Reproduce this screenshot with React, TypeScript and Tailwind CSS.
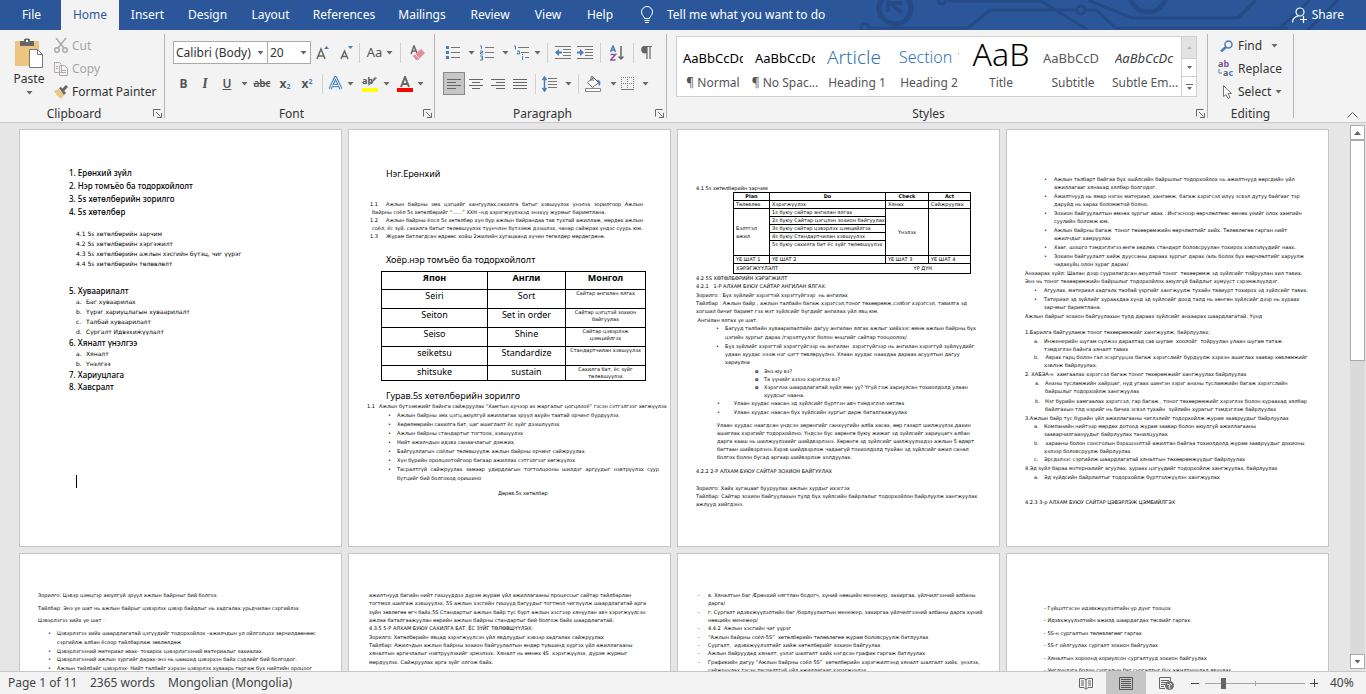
import React, { useState } from "react";

type Item = { m?: string; lines: string[]; c?: string };

const tabs = [
  { name: "File", w: "w-[59px]" },
  { name: "Home", w: "w-[58px]" },
  { name: "Insert", w: "w-[57px]" },
  { name: "Design", w: "w-[63px]" },
  { name: "Layout", w: "w-[63px]" },
  { name: "References", w: "w-[84px]" },
  { name: "Mailings", w: "w-[72px]" },
  { name: "Review", w: "w-[64px]" },
  { name: "View", w: "w-[52px]" },
  { name: "Help", w: "w-[52px]" },
];

const styles = [
  { name: "¶ Normal", sample: "AaBbCcDc", look: "pt-[2px] text-[13px] text-black" },
  { name: "¶ No Spac...", sample: "AaBbCcDc", look: "pt-[2px] text-[13px] text-black" },
  { name: "Heading 1", sample: "Article", look: "text-[19px] font-light text-[#2e74b5]" },
  { name: "Heading 2", sample: "Section 1", look: "text-[16px] font-light text-[#2e74b5]" },
  { name: "Title", sample: "AaB", look: "pb-2 text-[32px] font-light text-black justify-center" },
  { name: "Subtitle", sample: "AaBbCcD", look: "pt-[2px] text-[13px] text-[#5a5a5a]" },
  { name: "Subtle Em...", sample: "AaBbCcDc", look: "pt-[2px] text-[13px] italic text-[#404040]" },
];

const Arrow = () => (
  <svg width="7" height="4" viewBox="0 0 7 4" className="shrink-0">
    <path d="M.5 0h6L3.500 3.500z" fill="#666" />
  </svg>
);

const Sep = ({ className = "" }: { className?: string }) => (
  <span className={`h-5 w-px shrink-0 bg-[#d0d0d0] ${className}`} />
);

const Tool = ({ label, className = "", children }: { label: string; className?: string; children: React.ReactNode }) => (
  <button type="button" aria-label={label} className={`flex h-[23px] shrink-0 items-center justify-center ${className}`}>
    {children}
  </button>
);

const Launcher = () => (
  <button type="button" aria-label="More options" className="absolute right-[2px] bottom-0">
    <svg width="9" height="9" viewBox="0 0 9 9" fill="none" stroke="#666">
      <path d="M.5 7.500V.5h7M3 3l4.500 4.500M8.500 4v4.500H4" />
    </svg>
  </button>
);

const Group = ({ name, className, launcher = true, children }: { name: string; className: string; launcher?: boolean; children: React.ReactNode }) => (
  <section aria-label={name} className={`relative flex h-[84px] flex-col border-r border-[#b5b5b5] ${className}`}>
    <div className="flex-1">{children}</div>
    <div className="-mb-[2px] h-3 text-center leading-[12px]">{name}</div>
    {launcher && <Launcher />}
  </section>
);

const alignments = [
  { label: "Center", d: "M0 1.500h14M3 4.500h8M0 7.500h14M3 10.500h8" },
  { label: "Align right", d: "M0 1.500h14M5 4.500h9M0 7.500h14M5 10.500h9" },
  { label: "Justify", d: "M0 1.500h14M0 4.500h14M0 7.500h14M0 10.500h14" },
];

const Circuit = () => (
  <svg width="506" height="30" viewBox="860 0 506 30" fill="none" stroke="#254a86" strokeWidth="3" className="absolute top-0 right-0">
    <circle cx="895" cy="8" r="16" strokeWidth="5" />
    <path d="M888 0v12M889 2l13 11M890 3h12" strokeWidth="4" />
    <path d="M870 28h98l22-18h87M1085 10h11l20 18h172M948 1h93l47 29M1088 0l44 18h106l18-18M1278 30l32-30M1308 30l30-30" />
    <circle cx="1081" cy="10" r="4" />
    <circle cx="865" cy="28" r="4" />
    <circle cx="942" cy="0" r="4" />
    <circle cx="1148" cy="-6" r="18" strokeWidth="5" />
  </svg>
);

const Ribbon = () => (
  <div className="relative flex h-[93px] shrink-0 border-b border-[#c9c9c9] bg-[#f3f3f3] pt-1 text-xs text-[#333]">
    <Group name="Clipboard" className="w-[165px] pr-4">
      <div className="flex">
        <button type="button" className="flex w-[54px] shrink-0 flex-col items-center pt-1 pl-1">
          <svg width="28" height="30" viewBox="0 0 28 30">
            <path d="M0 3h24v25H0z" fill="#ecc681" />
            <path d="M5 3h4V1.500C9 0 15 0 15 1.500V3h4v5H5z" fill="#666" />
            <path d="M11 2h2v2h-2z" fill="#fff" />
            <path d="M14.500 11.500h8l5 5v13h-13z" fill="#fff" stroke="#777" />
            <path d="M22.500 11.500v5h5" fill="none" stroke="#777" />
          </svg>
          <span className="mt-[3px] mb-1 leading-[16px]">Paste</span>
          <Arrow />
        </button>
        <div className="flex flex-col">
          <button type="button" className="flex h-[23px] items-center gap-1 text-[#a6a6a6]">
            <svg width="14" height="15" viewBox="0 0 14 15" fill="none" stroke="#a9a9a9" strokeWidth="1.500">
              <path d="M2 0l8 10M12 0L4 10" />
              <circle cx="3" cy="12" r="2.300" />
              <circle cx="11" cy="12" r="2.300" />
            </svg>
            Cut
          </button>
          <button type="button" className="flex h-[23px] items-center gap-1 text-[#a6a6a6]">
            <svg width="14" height="14" viewBox="0 0 14 14" fill="#f3f3f3" stroke="#b0aab0">
              <path d="M.5.5h5l2 2v8h-7zM5.500 3.500h5l3 3v7h-8zM7 8.500h5M7 10.500h5M2 4.500h2M2 6.500h2" />
            </svg>
            Copy
          </button>
          <button type="button" className="flex h-[23px] items-center gap-1 whitespace-nowrap">
            <svg width="14" height="14" viewBox="0 0 14 14">
              <path d="M0 6l5-2 5 6-3 4C4 12 2 9 0 6z" fill="#ecc681" />
              <path d="M5 3l2-1 5 6-2 2z" fill="#666" />
              <path d="M9 5l4-4" stroke="#666" strokeWidth="3" />
            </svg>
            Format Painter
          </button>
        </div>
      </div>
    </Group>

    <Group name="Font" className="w-[270px] pr-6 pl-2">
      <div className="flex items-center pt-[7px]">
        <div className="relative flex items-center">
          <select aria-label="Font" className="h-[23px] w-[95px] appearance-none border border-[#ababab] bg-white pl-[2px] text-[#333]">
            <option>Calibri (Body)</option>
          </select>
          <span className="pointer-events-none absolute right-1"><Arrow /></span>
        </div>
        <div className="relative -ml-px flex items-center">
          <select aria-label="Font size" className="h-[23px] w-11 appearance-none border border-[#ababab] bg-white pl-[2px] text-[#333]">
            <option>20</option>
          </select>
          <span className="pointer-events-none absolute right-1"><Arrow /></span>
        </div>
        <Tool label="Increase font size" className="w-6">
          <svg width="14" height="16" viewBox="0 0 14 16" fill="none" stroke="#666" strokeWidth="1.500">
            <path d="M1 14L5 4l4 10M2.500 11h5" />
            <path d="M8 4l2.500-3L13 4z" fill="#4a7ebb" stroke="none" />
          </svg>
        </Tool>
        <Tool label="Decrease font size" className="w-6">
          <svg width="14" height="16" viewBox="0 0 14 16" fill="none" stroke="#666" strokeWidth="1.500">
            <path d="M1 14l3.500-8L8 14M2.500 11.500h4" />
            <path d="M8 1l2.500 3L13 1z" fill="#4a7ebb" stroke="none" />
          </svg>
        </Tool>
        <Sep />
        <Tool label="Change case" className="w-10 gap-1 text-[13px] text-[#555]">Aa<Arrow /></Tool>
        <Sep />
        <Tool label="Clear formatting" className="w-8">
          <svg width="15" height="16" viewBox="0 0 15 16">
            <path d="M1 9l3-8 3 7M2 6h4" fill="none" stroke="#666" strokeWidth="1.500" />
            <path d="M3 11l8-7 4 4-7 7H6z" fill="#e88a9d" />
            <path d="M5 9l4 4" stroke="#fff" />
          </svg>
        </Tool>
      </div>
      <div className="flex items-center pt-2 text-[#555]">
        <Tool label="Bold" className="w-[21px] font-bold">B</Tool>
        <Tool label="Italic" className="w-[22px] font-serif text-sm font-bold italic">I</Tool>
        <Tool label="Underline" className="w-[22px] font-semibold underline">U</Tool>
        <Tool label="Underline style" className="w-3"><Arrow /></Tool>
        <Tool label="Strikethrough" className="w-6 text-[10px] font-semibold line-through">abc</Tool>
        <Tool label="Subscript" className="w-[22px] font-bold"><span>x<sub className="text-[7px] text-[#4a7ebb]">2</sub></span></Tool>
        <Tool label="Superscript" className="w-[22px] font-bold"><span>x<sup className="text-[7px] text-[#4a7ebb]">2</sup></span></Tool>
        <Sep className="ml-1" />
        <Tool label="Text effects" className="w-9 gap-1">
          <svg width="15" height="15" viewBox="0 0 15 15" fill="none">
            <path d="M2 13L7.500 1.500 13 13M4.500 9.500h6" stroke="#a9cdf0" strokeWidth="4" />
            <path d="M2 13L7.500 1.500 13 13M4.500 9.500h6" stroke="#3c74b4" strokeWidth="2.500" />
            <path d="M2 13L7.500 1.500 13 13M4.500 9.500h6" stroke="#fff" />
          </svg>
          <Arrow />
        </Tool>
        <Tool label="Highlight" className="w-[34px] gap-1">
          <svg width="17" height="16" viewBox="0 0 17 16" className="overflow-visible">
            <text x="0" y="8" fontSize="9" fontWeight="bold" fill="#555">ab</text>
            <path d="M15 2L9 8l-3 2 1-3 6-6z" fill="#777" />
            <path d="M0 12h16v4H0z" fill="#ff0" />
          </svg>
          <Arrow />
        </Tool>
        <Tool label="Font color" className="w-[34px] gap-1">
          <svg width="16" height="16" viewBox="0 0 16 16">
            <path d="M4 11L8 1l4 10M5 8h6" fill="none" stroke="#666" strokeWidth="2" />
            <path d="M0 12h16v4H0z" fill="red" />
          </svg>
          <Arrow />
        </Tool>
      </div>
    </Group>

    <Group name="Paragraph" className="w-[232px] pr-6 pl-2">
      <div className="flex items-center pt-[7px]">
        <Tool label="Bullets" className="w-[34px] gap-2">
          <svg width="14" height="15" viewBox="0 0 14 15">
            <path d="M5 2.500h9M5 7.500h9M5 12.500h9" stroke="#777" />
            <path d="M0 1h3v3H0zM0 6h3v3H0zM0 11h3v3H0z" fill="#4a7ebb" />
          </svg>
          <Arrow />
        </Tool>
        <Tool label="Numbering" className="w-[34px] gap-2">
          <svg width="14" height="16" viewBox="0 0 14 16">
            <path d="M5 2.500h9M5 7.500h9M5 12.500h9" stroke="#777" />
            <path d="M0 1h1.500v3M0 6h2.500v1.500H.5V9H3M0 11h2.500v2H1M2.500 13v2H0" fill="none" stroke="#4a7ebb" />
          </svg>
          <Arrow />
        </Tool>
        <Tool label="Multilevel list" className="w-8 gap-1">
          <svg width="17" height="16" viewBox="0 0 17 16">
            <path d="M5 2.500h11M8 7.500h8M12 12.500h4" stroke="#777" />
            <path d="M1 1h1.500v3.500M4 6h2.500v3H4.500V7.500M9.500 11v4M9.500 9v1" fill="none" stroke="#4a7ebb" />
          </svg>
          <Arrow />
        </Tool>
        <Sep className="ml-1" />
        <Tool label="Decrease indent" className="ml-1 w-[22px]">
          <svg width="16" height="14" viewBox="0 0 16 14">
            <path d="M0 .5h16M8 3.500h8M8 6.500h8M8 9.500h8M0 12.500h16" stroke="#777" />
            <path d="M0 6.500L4 3v2.500h3v2H4V10z" fill="#4a7ebb" />
          </svg>
        </Tool>
        <Tool label="Increase indent" className="w-[22px]">
          <svg width="16" height="14" viewBox="0 0 16 14">
            <path d="M0 .5h16M8 3.500h8M8 6.500h8M8 9.500h8M0 12.500h16" stroke="#777" />
            <path d="M7 6.500L3 3v2.500H0v2h3V10z" fill="#4a7ebb" />
          </svg>
        </Tool>
        <Sep className="ml-1" />
        <Tool label="Sort" className="w-8">
          <svg width="14" height="16" viewBox="0 0 14 16" fill="none" strokeWidth="1.500">
            <path d="M.5 7L3 1l2.500 6M1.500 5h3" stroke="#4a7ebb" />
            <path d="M.5 9.500h5l-5 5.500h5" stroke="#8a4fae" />
            <path d="M11 1v13M8.500 11.500L11 14l2.500-2.500" stroke="#666" />
          </svg>
        </Tool>
        <Sep />
        <Tool label="Show formatting marks" className="w-6">
          <svg width="11" height="13" viewBox="0 0 11 13">
            <path d="M11 .5H4a3 3 0 000 6.500h1M6 .5V13M9 .5V13" fill="none" stroke="#666" strokeWidth="1.200" />
            <path d="M6 .5H4a3 3 0 000 6.500h2z" fill="#666" />
          </svg>
        </Tool>
      </div>
      <div className="flex items-center pt-2">
        <button type="button" aria-label="Align left" className="flex h-[23px] w-[22px] shrink-0 items-center justify-center border border-[#888] bg-[#c6c6c6]">
          <svg width="14" height="12" viewBox="0 0 14 12" stroke="#666"><path d="M0 1.500h14M0 4.500h9M0 7.500h14M0 10.500h9" /></svg>
        </button>
        {alignments.map((a) => (
          <Tool key={a.label} label={a.label} className="w-[22px]">
            <svg width="14" height="12" viewBox="0 0 14 12" stroke="#666"><path d={a.d} /></svg>
          </Tool>
        ))}
        <Sep className="ml-1" />
        <Tool label="Line spacing" className="ml-1 w-[34px] gap-2">
          <svg width="15" height="16" viewBox="0 0 15 16">
            <path d="M6 2.500h9M6 5.500h9M6 8.500h9M6 11.500h9" stroke="#777" />
            <path d="M2.500 1v14M.5 4l2-3 2 3M.5 12l2 3 2-3" fill="none" stroke="#4a7ebb" strokeWidth="1.500" />
          </svg>
          <Arrow />
        </Tool>
        <Sep className="ml-1" />
        <Tool label="Shading" className="ml-1 w-9 gap-2">
          <svg width="17" height="16" viewBox="0 0 17 16">
            <path d="M2.500 6.500l6-5 5 5-6 5z" fill="#fff" stroke="#666" />
            <path d="M6 5V1c0-1 2-1 2 0v4" fill="none" stroke="#666" />
            <path d="M12 4c3 0 4 2 3 5l-1 1c-1-3-1-4-2-6z" fill="#4a7ebb" />
            <path d="M.5 12.500h15v3H.5z" fill="#fff" stroke="#888" />
          </svg>
          <Arrow />
        </Tool>
        <Tool label="Borders" className="w-8 gap-2">
          <svg width="13" height="13" viewBox="0 0 13 13" fill="none" stroke="#777">
            <path d="M.5 0v12M6.500 0v12M12.500 0v12M0 .5h13M0 6.500h13" strokeDasharray="1 1" />
            <path d="M0 12.500h13" />
          </svg>
          <Arrow />
        </Tool>
      </div>
    </Group>

    <Group name="Styles" className="w-[541px] pr-[26px] pl-[9px]">
      <div className="-mr-4 mt-[2px] flex h-[61px] border border-[#cfcfcf] bg-white">
        {styles.map((s) => (
          <button type="button" key={s.name} className="flex w-[72px] flex-col items-center pt-[6px] whitespace-nowrap">
            <span className={`flex h-[30px] w-[60px] items-center overflow-hidden ${s.look}`}>{s.sample}</span>
            <span className="mt-[2px] leading-[16px] text-[#555]">{s.name}</span>
          </button>
        ))}
        <div className="ml-auto flex w-[15px] flex-col border-l border-[#cfcfcf]">
          <button type="button" aria-label="Previous row" className="flex h-[21px] items-center justify-center bg-[#e3e3e3]">
            <svg width="5" height="3" viewBox="0 0 5 3"><path d="M0 3h5L2.500 0z" fill="#bbb" /></svg>
          </button>
          <button type="button" aria-label="Next row" className="flex h-[19px] items-center justify-center border-y border-[#cfcfcf]">
            <svg width="5" height="3" viewBox="0 0 5 3"><path d="M0 0h5L2.500 3z" fill="#666" /></svg>
          </button>
          <button type="button" aria-label="More styles" className="flex flex-1 items-center justify-center">
            <svg width="7" height="6" viewBox="0 0 7 6"><path d="M0 0h7v1H0zM1 3h5L3.500 6z" fill="#666" /></svg>
          </button>
        </div>
      </div>
    </Group>

    <Group name="Editing" launcher={false} className="w-[86px] px-3">
      <button type="button" className="flex h-[23px] items-center gap-[5px]">
        <svg width="13" height="12" viewBox="0 0 13 12" fill="none" stroke="#4a7ebb">
          <circle cx="8.500" cy="4.500" r="3.500" strokeWidth="1.500" />
          <path d="M6 7l-5 4.500" strokeWidth="2.500" />
        </svg>
        Find
        <span className="ml-1"><Arrow /></span>
      </button>
      <button type="button" className="flex h-[23px] items-center gap-1">
        <svg width="16" height="17" viewBox="0 0 16 17" fontSize="9" fontWeight="bold" className="-ml-[2px] shrink-0 overflow-visible">
          <text x="0" y="7" fill="#666">a<tspan fill="#8a4fae">b</tspan></text>
          <text x="5" y="16" fill="#666">a<tspan fill="#4a7ebb">c</tspan></text>
          <path d="M1 9v4h3" fill="none" stroke="#4a7ebb" />
        </svg>
        Replace
      </button>
      <button type="button" className="flex h-[23px] items-center gap-[5px]">
        <svg width="13" height="14" viewBox="0 0 13 14" fill="#fff" stroke="#777">
          <path d="M3.500.5v11l2.500-2 2 4 2-1-2-4h3.500z" />
        </svg>
        <span className="flex items-center gap-1">Select<Arrow /></span>
      </button>
    </Group>
    <button type="button" aria-label="Collapse the ribbon" className="mt-auto mr-2 mb-1 ml-auto">
      <svg width="11" height="6" viewBox="0 0 11 6" fill="none" stroke="#555"><path d="M.5 5.500l5-5 5 5" /></svg>
    </button>
  </div>
);

const Page = ({ className = "", children }: { className?: string; children: React.ReactNode }) => (
  <article className={`h-[418px] w-[323px] overflow-hidden border border-[#c6c6c6] bg-white font-['DejaVu_Sans',sans-serif] text-[5px] leading-[8px] whitespace-pre ${className}`}>
    {children}
  </article>
);

const Title = ({ className = "", children }: { className?: string; children: React.ReactNode }) => (
  <h2 className={`ml-[37px] font-['Noto_Sans',sans-serif] text-[9px] leading-[12px] ${className}`}>{children}</h2>
);

const Chapter = ({ className = "leading-[12px]", children }: { className?: string; children: React.ReactNode }) => (
  <p className={`font-['Noto_Sans',sans-serif] text-[8px] font-medium ${className}`}>{children}</p>
);

const List = ({ className = "", mark, items }: { className?: string; mark: string; items: Item[] }) => (
  <ul className={className}>
    {items.map((it, i) => (
      <li key={i} className={`flex ${it.c || ""}`}>
        <span className={`shrink-0 ${mark}`}>{it.m === undefined ? "•" : it.m}</span>
        <div className="flex-1">
          {it.lines.map((l, j) => (
            <p key={j}>{l}</p>
          ))}
        </div>
      </li>
    ))}
  </ul>
);

const terms = [
  ["Seiri", "Sort", "Сайтар ангилан ялгах"],
  ["Seiton", "Set in order", "Сайтар цэгцтэй зохион\nбайгуулах"],
  ["Seiso", "Shine", "Сайтар цэвэрлэж\nцэмцийлгэх"],
  ["seiketsu", "Standardize", "Стандартчилан хэвшүүлэх"],
  ["shitsuke", "sustain", "Сахилга бат, ёс зүйг\nтөлөвшүүлэх"],
];

const PageOne = () => (
  <Page className="pt-9 pl-[49px]">
    <Chapter className="leading-[13px]">1. Ерөнхий зүйл</Chapter>
    <Chapter className="leading-[13px]">2. Нэр томъёо ба тодорхойлолт</Chapter>
    <Chapter className="leading-[13px]">3. 5s хөтөлбөрийн зорилго</Chapter>
    <Chapter className="leading-[13px]">4. 5s хөтөлбөр</Chapter>
    <div className="mt-[11px] mb-4 ml-[7px] text-[6px] leading-[10px]">
      <p>4.1 5s хөтөлбөрийн зарчим</p>
      <p>4.2 5s хөтөлбөрийн хэргэжилт</p>
      <p>4.3 5s хөтөлбөрийн ажлын хэсгийн бүтэц, чиг үүрэг</p>
      <p>4.4 5s хөтөлбөрийн төлөвлөлт</p>
    </div>
    <Chapter>5. Хуваарилалт</Chapter>
    <List
      className="ml-[7px] text-[6px] leading-[10px]"
      mark="w-[10px]"
      items={[
        { m: "a.", lines: ["Баг хуваарилах"] },
        { m: "b.", lines: ["Үүрэг хариуцлагын хуваарилалт"] },
        { m: "c.", lines: ["Талбай хуваарилалт"] },
        { m: "d.", lines: ["Сургалт Идвэхижүүлалт"] },
      ]}
    />
    <Chapter>6. Хяналт үнэлгээ</Chapter>
    <List
      className="ml-[7px] text-[6px] leading-[10px]"
      mark="w-[10px]"
      items={[
        { m: "a.", lines: ["Хяналт"] },
        { m: "b.", lines: ["Үнэлгээ"] },
      ]}
    />
    <Chapter>7. Хариуцлага</Chapter>
    <Chapter>8. Хавсралт</Chapter>
    <div className="mt-[82px] ml-[7px] h-[13px] w-px bg-black" />
  </Page>
);

const PageTwo = () => (
  <Page className="pt-[38px]">
    <Title>Нэг.Ерөнхий</Title>
    <div className="mt-5 ml-[23px] w-[271px]">
      <div className="-ml-[2px] flex">
        <span className="w-4">1.1</span>
        <p className="flex-1 whitespace-normal [text-align-last:justify]">Ажлын байрны эмх цэгцийг хангуулах,сахилга батыг хэвшүүлэх үнэлэх зорилгоор Ажлын</p>
      </div>
      <p>байрны соёл 5s хөтөлбөрийг “……” ХХН –нд хэрэгжүүлэхэд энэхүү журмыг баримтлана.</p>
      <div className="-ml-[2px] flex">
        <span className="w-4">1.2</span>
        <p className="flex-1 whitespace-nowrap [text-align-last:justify]">Ажлын байрны ёосл 5s хөтөлбөр хүн бүр ажлын байрандаа тав тухтай ажиллаж, мөрдөх ажлын</p>
      </div>
      <p>соёл, ёс зүй, сахилга батыг төлөвшүүлэх түүнчлэн бүтээмж дээшлэх, чанар сайжрах үндэс суурь юм.</p>
      <div className="-ml-[2px] flex">
        <span className="w-4">1.3</span>
        <p>Журам батлагдсан өдрөөс хойш 2жилийн хугацаанд хүчин төгөлдөр мөрдөгдөнө.</p>
      </div>
    </div>
    <Title className="mt-[14px]">Хоёр.нэр томъёо ба тодорхойлолт</Title>
    <table className="mt-[5px] ml-8 w-[265px] table-fixed border-collapse text-center [&_td]:border [&_td]:border-black [&_td]:p-0 [&_td]:align-top [&_th]:border [&_th]:border-black [&_th]:p-0 [&_th]:align-top">
      <thead className="font-['Noto_Sans',sans-serif]">
        <tr className="h-[18px] text-[9px] leading-[12px]">
          <th className="w-[106px]">Япон</th>
          <th className="w-[78px]">Англи</th>
          <th>Монгол</th>
        </tr>
      </thead>
      <tbody>
        {terms.map((t, i) => (
          <tr key={t[0]} className={i === 4 ? "h-[15px]" : "h-[19px]"}>
            <td className="font-['Noto_Sans',sans-serif] text-[9px] leading-[12px]">{t[0]}</td>
            <td className="font-['Noto_Sans',sans-serif] text-[9px] leading-[12px]">{t[1]}</td>
            <td className="leading-[7px]">{t[2]}</td>
          </tr>
        ))}
      </tbody>
    </table>
    <Title className="mt-[9px]">Гурав.5s хөтөлбөрийн зорилго</Title>
    <List
      className="ml-[18px] leading-[9px]"
      mark="w-3"
      items={[{ m: "1.1", lines: ["Ажлын бүтээмжийг байнга сайжруулах “Хамтын хүчээр аз жаргалыг цогцлооё” гэсэн сэтгэлгээг хөгжүүлэх"] }]}
    />
    <List
      className="ml-[39px] leading-[9px]"
      mark="w-[9px]"
      items={[
        { lines: ["Ажлын байрны эмх цэгц,аюулгүй ажиллагаа эрүүл ахуйн таатай орчинг бүрдүүлэх"] },
        { lines: ["Хөдөлмөрийн сахилга бат, цаг ашиглалт ёс зүйг дээшлүүлэх"] },
        { lines: ["Ажлын байрны стандартыг тогтоох, хэвшүүлэх"] },
        { lines: ["Нийт ажилчдын идэвх санаачлагыг дэмжих"] },
        { lines: ["Байгууллагын соёлыг төлөвшүүлж ажлын байрны орчмнг сайжруулах"] },
        { lines: ["Хүн бүрийн оролцоотойгоор багаар ажиллах сэтгэлгээг хөгжүүлэх"] },
      ]}
    />
    <div className="ml-[39px] flex leading-[9px]">
      <span className="w-[9px]">•</span>
      <div className="w-[262px] whitespace-normal">
        <p className="[text-align-last:justify]">Тасралтгүй сайжруулах замаар удирдлагын тогтолцооны шилдэг аргуудыг нэвтрүүлэх суур</p>
        <p>бүтцийг бий болгоход оришино</p>
      </div>
    </div>
    <p className="mt-[6px] ml-[149px]">Дөрөв.5s хөтөлбөр</p>
  </Page>
);

const PageThree = () => (
  <Page className="pt-[54px] pl-[18px]">
    <p>4.1 5s хөтөлбөрийн зарчим</p>
    <table className="ml-[37px] w-[238px] table-fixed border-collapse leading-[7px] [&_td]:border [&_td]:border-black [&_td]:px-[2px] [&_td]:py-0 [&_th]:border [&_th]:border-black [&_th]:p-0">
      <colgroup>
        <col className="w-[36px]" />
        <col className="w-[116px]" />
        <col className="w-[43px]" />
        <col />
      </colgroup>
      <thead>
        <tr><th>Plan</th><th>Do</th><th>Check</th><th>Act</th></tr>
      </thead>
      <tbody>
        <tr><td>Төлөвлөх</td><td>Хэрэгжүүлэх</td><td>Хянах</td><td>Сайжруулах</td></tr>
        <tr>
          <td rowSpan={5} className="leading-[8px]">{"Бэлтгэл\nажил"}</td>
          <td>1s буюу сайтар ангилан ялгах</td>
          <td rowSpan={5} className="text-center">Үнэлэх</td>
          <td rowSpan={5} />
        </tr>
        <tr><td>2s буюу Сайтар цэгцлэн зохион байгуулах</td></tr>
        <tr><td>3s буюу сайтар цэвэрлэх цэмцийлгэх</td></tr>
        <tr><td>4s буюу Стандартчилан хэвшүүлэх</td></tr>
        <tr className="h-[15px]"><td className="align-top">5s буюу сахилга бат ёс зүйг төлөвшүүлэх</td></tr>
        <tr><td>ҮЕ ШАТ 1</td><td>ҮЕ ШАТ 2</td><td>ҮЕ ШАТ 3</td><td>ҮЕ ШАТ 4</td></tr>
        <tr className="h-[10px]">
          <td colSpan={4}><span className="flex justify-between pr-9"><span>ХЭРЭГЖҮҮЛЭЛТ</span><span>ҮР ДҮН</span></span></td>
        </tr>
      </tbody>
    </table>
    <p>4.2 5S ХӨТӨЛБӨРИЙН ХЭРЭГЖИЛТ</p>
    <p>4.2.1   1-Р АЛХАМ БУЮУ САЙТАР АНГИЛАН ЯЛГАХ:</p>
    <p className="mt-px">Зорилго : Бүх зүйлийг хэрэгтэй хэрэггүйгээр  нь ангилах</p>
    <p>Тайлбар : Ажлын байр , ажлын талбайн багаж хэрэгсэл,тоног төхөөрөмж,сэлбэг хэрэгсэл, тавилга эд</p>
    <p>хогшил бичиг баримт гэх мэт зүйлсийг бүгдийг ангилах үйл явц юм.</p>
    <p className="mt-px"> Ангилан ялгах үе шат.</p>
    <List
      className="ml-5"
      mark="w-[9px]"
      items={[
        { c: "leading-[9px]", lines: ["Багууд талбайн хуваарилалтийн дагуу ангилан ялгах ажлыг хийхээс өмнө ажлын байрны бүх", "цэгийн зургыг дарах /гэрэлтүүлэг болон өнцгийг сайтар тооцоолох/"] },
        { lines: ["Бүх зүйлийг хэрэгтэй хэрэггүйгээр нь ангилан  хэрэггүйгээр нь ангилан хэрэггүй зүйлүүдийг", "удаан хуудас нээж нэг цэгт төвлөрүүлнэ. Улаан хуудас наахдаа дараах асуултын дагуу", "хариулна"] },
      ]}
    />
    <List
      className="mt-px ml-[59px]"
      mark="w-[9px] font-bold"
      items={[
        { m: "o", lines: ["Энэ юу вэ?"] },
        { m: "o", lines: ["Та үүнийг хэзээ хэрэглэх вэ?"] },
        { m: "o", lines: ["Хэрэглэх шаардлагатай зүйл мөн уу? Үгүй гэж хариулсан тохиолдолд улаан", "хуудсыг наана."] },
      ]}
    />
    <List
      className="ml-[21px] leading-[9px]"
      mark="w-[17px]"
      items={[{ lines: ["Улаан хуудас наасан эд зүйлсийг бүртгэн авч тэмдэглэл хөтлөх"] }, { lines: ["Улаан хуудас наасан бүх зүйлсийн зургыг дарж баталгаажуулах"] }]}
    />
    <div className="mt-1 ml-[21px]">
      <p>Улаан хуудас наагдсан үндсэн хөрөнгийг санхүүгийн алба хасах, өөр газарт шилжүүлэх,дахин</p>
      <p>ашиглах хэрэгийг тодорхойлно. Үндсэн бус хөрөнгө буюу жижиг эд зүйлсийг хариуцагч албан</p>
      <p>дарга хааш нь шилжүүлэхийг шийдвэрлэнэ. Хөрөнгө эд зүйлсийг шилжүүлэхдээ ажлын 5 өдөрт</p>
      <p>багтаан шийвэрлэнэ.Хэрэв шийдвэрлэж чадаагүй тохиолдолд тухйан эд зүйлсийг ажил санал</p>
      <p>болгох болон бусад аргаар шийвэрлэж холдуулах.</p>
    </div>
    <p className="mt-[6px]">4.2.2 2-Р АЛХАМ БУЮУ САЙТАР ЗОХИОН БАЙГУУЛАХ</p>
    <p className="mt-[9px]">Зорилго: Хайх хугацааг бууруулах ажлын хурдыг ихэсгэх</p>
    <p>Тайлбар: Сайтар зохион байгуулахын тулд бүх зүйлсийн байрлалыг тодорхойлон байрлуулж хангжуулах</p>
    <p>ажлууд хийгдэнэ.</p>
  </Page>
);

const PageFour = () => (
  <Page className="pt-[45px] pl-[18px]">
    <List
      className="ml-[19px]"
      mark="w-[10px]"
      items={[
        { lines: ["Ажлын талбарт байгаа бүх эшйлсийн байршлыг тодорхойлох нь ажилтнууд өөрсдийн үйл", "ажиллагааг хянахад хялбар болгодог."] },
        { c: "mt-px", lines: ["Ажилтнууд нь ямар нэгэн материал, хангамж, багаж хэрэгсэл илүү эсвэл дутуу байгааг тэр", "даруйд нь харах боломжтой болно."] },
        { c: "mt-px", lines: ["Зохион байгуулалтын өмнөх зургыг авах . Ингэснээр өөрчлөлтөөс өмнөх үеийг олох хамгийн", "суулийн боломж юм."] },
        { c: "mt-px", lines: ["Ажлын байрны багаж  тоног төхөөрөмжийн өөрчлөлтийг хийх. Төлөвлөгөө гарган нийт", "ажилчдыг хамруулах"] },
        { c: "mt-px", lines: ["Хааг, шошго тэмдэглэгээ,өнгө хөдлөх стандарт боловсруулан тохирох хэвлэлүүдийг наах."] },
        { c: "mt-px", lines: ["Зохион байгуулалт хийж дууссаны дараах зургыг дарах /аль болох бүх өөрчлөлтийг харуулж", "чадахуйц олон зураг дарах/"] },
      ]}
    />
    <p className="mt-px">Анхаарах зүйл: Шалан дээр суурилагдсан аюултай тоног  төхөөрөмж эд зүйлсийг тойруулан хил тавих.</p>
    <p>Энэ нь тоног төхөөрөмжийн байршлыг тодорхойлох аюулгүй байдлыг хүмүүст сэрэмжлүүлдэг.</p>
    <List
      className="mt-px ml-[9px]"
      mark="w-[10px]"
      items={[
        { lines: ["Агуулах, материал хадгалх таобай үзргийг хангжуулж тухайн тавиурт тохирох эд зүйлсийг тавих."] },
        { c: "mt-px", lines: ["Татериал эд зүйлийг хураахдаа хүнд эд зүйлсийг доод талд нь хөнгөн зүйлсийг дээр нь хураах", "зарчмыг баримтлана."] },
      ]}
    />
    <p className="mt-px">Ажлын байрыг зохион байгуулахын тулд дараах зүйлсийг анхаарах шаардлагатай. Үүнд</p>
    <p className="mt-2">1.Барилга байгууламж тоног төхөөрөмжийг хангжуулж, байрлуулах;</p>
    <List
      className="mt-px ml-[9px]"
      mark="w-[10px]"
      items={[
        { m: "a.", lines: ["Инженерийн шугам сүлжээ даралтад сав шугам  хоолойг  тойруулан улаан шугам татаж", "тэмдэглэн байнга хяналт тавих"] },
        { m: "b.", lines: [" Аврах гарц болон гал эсэргүүцэх багаж хэрэгслийг бүрдүүлж хэрхэн ашиглах заавар хөвлөмжийг", "хэвлэж байрлуулах."] },
      ]}
    />
    <p className="mt-px">2. ХАБЭА-н  хамгаалах хэрэгсэл багаж тоног төхөрөмжийг хангжуулах байрлуулах</p>
    <List
      className="mt-px ml-[10px]"
      mark="w-[10px]"
      items={[
        { m: "a.", lines: ["Анхны тусламжийн хайрцаг, нүд угаах шингэн зэрэг анхны тусламжийн багаж хэрэгслийн", "байршлыг тодорхойлж хангжуулах"] },
        { m: "b.", c: "mt-[2px]", lines: ["Нэг бүрийн хамгаалах хэрэгсэл, гар багаж , тоног төхөөрөмжийг хэрэглэх болон хураахад хялбар", "байлгахын тлд нэрийг нь бичих эсвэл тухайн  зүйлийн хурагыг тэмдэглэж байрлуулах"] },
      ]}
    />
    <p className="mt-px">3.Ажлын байр тус бүрийн үйл ажиллагааны чиглэлийг тодорхойлж журам зааврүудыг байрлуулах</p>
    <List
      className="ml-[9px]"
      mark="w-[10px]"
      items={[
        { m: "a.", lines: ["Компанийн нийтээр мөрдөх дотоод журам заавар болон аюулгүй ажиллагааны", "зааварчилгаануудыг байрлуулах танилцуулах"] },
        { m: "b.", c: "mt-px", lines: [" харааны болон сонсголын бэрхшээлтэй ажилтан байгаа тохиолдолд журам зааврүудыг дохионы", "хэлээр боловсруулж байрлуулах"] },
        { m: "c.", lines: ["Эрсдэлээс сэргийлж шаардлагатай хяналтын төхөөрөмжүүдыг байрлуулах"] },
      ]}
    />
    <p className="mt-px">4.Эд зүйл бараа мэтерналийг агуулах, хураах цэгүүдийг тодорхойлж хангжуулах, байрлуулах</p>
    <List className="mt-px ml-[9px]" mark="w-[10px]" items={[{ m: "a.", lines: ["Эд зүйдсийн байрлалтыг тодорхойлж бүртгэлжүүлэн хангжуулах"] }]} />
    <p className="mt-[17px]">4.2.3 3-р АЛХАМ БУЮУ САЙТАР ЦЭВЭРЛЭЖ ЦЭМБИЙЛГЭХ</p>
  </Page>
);

const PageFive = () => (
  <Page className="pt-[37px] pl-[18px]">
    <p>Зорилго: Цэвэр цэмцгэр аюулгүй эрүүл ажлын байрныг бий болгох</p>
    <p className="mt-[5px]">Тайлбар: Энэ үе шат нь ажлын байрыг цэвэрлэх цэвэр байдлыг нь хадгалах урьдчилан сэргийлэх</p>
    <p className="mt-1">Цэвэрлэгээ хийх үе шат :</p>
    <List
      className="mt-[5px] ml-[10px]"
      mark="w-[9px]"
      items={[
        { c: "leading-[9px]", lines: ["Цэвэрлэгээ хийх шаардлагатай цэгүүдийг тодорхойлох –ажилчдын ул ойлголцох зөрчилдөөнөөс", "сэргийлж албан ёсоор тайлбарлаж зөвлөлдөж"] },
        { lines: ["Цэвэрлэгээний материал авах- тохирох цэвэрлэгээний материалыг захиалах"] },
        { lines: ["Цэвэрлэгээний ажлын зургийг дарах-энэ нь цаашид цэвэрхэн байх сэдлийг бий болгодог."] },
        { c: "mt-px", lines: ["Ажлын тайлбайг цэвэрлэх- Нийт талбайг хэрхэн цэвэрлэх хуваарь гаргаж бүх нийтийн ороцоог"] },
      ]}
    />
  </Page>
);

const PageSix = () => (
  <Page className="pt-[37px] pl-5">
    <p>ажилтнууд багийн нийт гишүүддээ дүрэм журам үйл ажиллагааны процессыг сайтар тайлбарлан</p>
    <p>тогтмол шалгаж хэвшүүлэх, 5S ажлын хэсгийн гишүүд багуудыг тогтмол чиглүүлж шаардлагатай арга</p>
    <p className="mt-px">зүйн зөвлөгөө өгч байх.5S Стандартыг ажлын байр тус бүрт ажлын хэсгээр хянуулан авч хэрэгжүүлсэн</p>
    <p>ажлаа баталгаажуулан өөрийн ажлын байрны стандартыг бий болгож байх шаардлагатай.</p>
    <p>4.3.5 5-Р АЛХАМ БУЮУ САХИЛГА БАТ, ЁС ЗҮЙГ ТӨЛӨВШҮҮЛЭХ:</p>
    <p className="mt-px">Зорилго: Хөтөлбөрийн явцад хэрэгжүүлсэн үйл явдлуудыг хэвээр хадгалах сайжруулах</p>
    <p>Тайлбар: Ажилчдын ажлын байрны зохион байгуулалтын өндөр түвшинд хүргэх үйл ажиллагааны</p>
    <p>хяналтын аргачлалыг нэвтрүүлэхийг эрмэлзэх. Хяналт нь өмнөх 4S  хэрэгжүүлэх, дүрэм журмыг</p>
    <p className="mt-px">мөрдүүлэх. Сайжруулах арга зүйг олгож байх.</p>
  </Page>
);

const PageSeven = () => (
  <Page className="pt-[37px] pl-5">
    <List
      mark="w-[10px]"
      items={[
        { m: "-", lines: ["в. Хяналтын баг /Ерөнхий нягтлан бодогч, хүний нөөцийн менежер, захиргаа, үйлчилгээний албаны", "дарга/"] },
        { m: "-", c: "mt-px", lines: ["г. Сургалт идэвхжүүлэлтийн баг /борлуулалтын менежер, захиргаа үйлчилгээний албаны дарга хүний", "нөөцийн менежер/"] },
        { m: "-", lines: ["4.4.2  Ажлын хэсгийн чиг үүрэг"] },
        { m: "-", c: "mt-px", lines: ["“Ажлын байрны соёл-5S”  хөтөлбөрийн төлөвлөгөө журам боловсруулж батлуулах"] },
        { m: "-", lines: ["Сургалт,  идэвхжүүлэлтийг хийж хөтөлбөрийг зохион байгуулах"] },
        { m: "-", lines: ["Ажлын байруудад хяналт, үзлэг шалгалт хийх нэгдсэн график гаргаж батлуулах"] },
        { m: "-", c: "mt-px", lines: ["Графикийн дагуу “Ажлын байрны соёл 5S”  хөтөлбөрийн хэрэгжилтэнд хяналт шалгалт хийх, үнэлэх,", "сайжруулах гэсэн тасралтгүй үйл ажиллагааг хэрэгжүүлэх"] },
      ]}
    />
  </Page>
);

const PageEight = () => (
  <Page className="pt-[50px] pl-[37px]">
    <p>- Гүйцэтгэсэн идэвхжүүлэлтийн үр дүнг тооцох</p>
    <p className="mt-1">- Идэвхжүүлэлтийн ажилд шаардагдах төсвийг гаргах</p>
    <p className="mt-[5px]">- 5S-н сургалтын төлөвлөгөөг гаргах</p>
    <p className="mt-1">- 5S-г ойлгуулах сургалт зохион байгуулах</p>
    <p className="mt-[5px]">- Хяналтын хороонд хориулсон сургалтууд зохион байгуулах</p>
    <p className="mt-1">- Чиглүүлэгч болон сургалын баг сургалтыг бүх ажилтнуудад явуулах</p>
  </Page>
);

const ScrollBar = () => (
  <div className="flex w-[18px] shrink-0 flex-col bg-[#e6e6e6] py-[2px] pr-px pl-[2px]">
    <div className="flex flex-1 flex-col bg-[#dadada]">
      <button type="button" aria-label="Scroll up" className="flex h-[15px] items-center justify-center border border-[#ababab] bg-white">
        <svg width="7" height="4" viewBox="0 0 7 4"><path d="M0 4h7L3.500 0z" fill="#666" /></svg>
      </button>
      <div className="h-[221px] border border-[#ababab] bg-white" />
      <button type="button" aria-label="Scroll down" className="mt-auto flex h-[15px] items-center justify-center border border-[#ababab] bg-white">
        <Arrow />
      </button>
    </div>
  </div>
);

const StatusBar = () => {
  const [zoom, setZoom] = useState(17);
  return (
    <footer className="flex h-[23px] shrink-0 items-center border-t border-[#c6c6c6] bg-[#f3f3f3] pl-2 text-xs text-[#444]">
      <span className="w-[82px]">Page 1 of 11</span>
      <span className="w-[78px]">2365 words</span>
      <span>Mongolian (Mongolia)</span>
      <button type="button" aria-label="Read mode" className="ml-auto flex h-full w-10 items-center justify-center">
        <svg width="14" height="13" viewBox="0 0 14 13" fill="none" stroke="#666">
          <path d="M.5 1.500h4.500l2 1 2-1h4.500v9H9l-2 2-2-2H.5zM7 2v10M2 4h3M2 6h3M2 8h3M9 4h3M9 6h3M9 8h3" />
        </svg>
      </button>
      <button type="button" aria-label="Print layout" className="flex h-full w-10 items-center justify-center bg-[#c6c6c6]">
        <svg width="14" height="13" viewBox="0 0 14 13" fill="none" stroke="#555">
          <path d="M.5.5h13v12H.5zM2 2.500h10M2 4.500h10M2 6.500h10M2 8.500h10M2 10.500h10" />
        </svg>
      </button>
      <button type="button" aria-label="Web layout" className="flex h-full w-10 items-center justify-center">
        <svg width="15" height="13" viewBox="0 0 15 13" fill="none" stroke="#666">
          <path d="M6 11.500H.5V.5h11V4M2 3.500h8M2 5.500h6M2 7.500h4M2 9.500h3" />
          <circle cx="10.500" cy="8.500" r="4" fill="#777" />
          <path d="M8 7l3 1-1 2 1 2M11 6l2 2" stroke="#f3f3f3" />
        </svg>
      </button>
      <button type="button" aria-label="Zoom out" className="ml-[5px] flex w-[14px] items-center">
        <svg width="8" height="8" viewBox="0 0 8 8" stroke="#444"><path d="M0 4.500h8" /></svg>
      </button>
      <label className="relative flex w-[100px] items-center">
        <span className="absolute left-1/2 h-[5px] w-px bg-[#a6a6a6]" />
        <input
          type="range"
          aria-label="Zoom"
          value={zoom}
          onChange={(e) => setZoom(Number(e.target.value))}
          className="relative h-3 w-full appearance-none bg-transparent [&::-webkit-slider-runnable-track]:h-px [&::-webkit-slider-runnable-track]:bg-[#a6a6a6] [&::-webkit-slider-thumb]:-mt-[5px] [&::-webkit-slider-thumb]:h-[11px] [&::-webkit-slider-thumb]:w-[5px] [&::-webkit-slider-thumb]:appearance-none [&::-webkit-slider-thumb]:bg-[#666]"
        />
      </label>
      <button type="button" aria-label="Zoom in" className="ml-[5px] w-5">
        <svg width="8" height="8" viewBox="0 0 8 8" stroke="#444"><path d="M0 4.500h8M4.500 0v8" /></svg>
      </button>
      <span className="w-9">40%</span>
    </footer>
  );
};

const App = () => (
  <div className="flex h-screen flex-col overflow-hidden bg-[#e6e6e6] font-['Noto_Sans','Open_Sans',sans-serif] text-black">
    <header className="relative flex h-[30px] shrink-0 items-center bg-[#2b579a] pl-[2px] text-xs text-white">
      <Circuit />
      <nav className="relative flex h-full">
        {tabs.map((t) => (
          <button type="button" key={t.name} className={`${t.w} ${t.name === "Home" ? "bg-[#f3f3f3] text-[#2b579a]" : ""}`}>
            {t.name}
          </button>
        ))}
      </nav>
      <button type="button" className="relative ml-[15px] flex items-center gap-[14px]">
        <svg width="12" height="18" viewBox="0 0 12 18" fill="none" stroke="#fff">
          <path d="M3.500 12.500c0-2-3-3-3-6.500a5.500 5.500 0 0111 0c0 3.500-3 4.500-3 6.500zM3.500 14.500h5M4 16.500h4" />
        </svg>
        Tell me what you want to do
      </button>
      <button type="button" className="relative mr-[22px] ml-auto flex items-center gap-1">
        <svg width="16" height="16" viewBox="0 0 16 16" fill="none" stroke="#fff" strokeWidth="1.200">
          <circle cx="8" cy="5" r="4" />
          <path d="M.5 15.500c0-4 3-6.500 6-6.500M8 12.500h7M11.500 9v7" />
        </svg>
        Share
      </button>
    </header>
    <Ribbon />
    <div className="flex min-h-0 flex-1">
      <main className="flex flex-1 flex-wrap content-start justify-center gap-[6px] overflow-hidden pt-[6px]">
        <PageOne />
        <PageTwo />
        <PageThree />
        <PageFour />
        <PageFive />
        <PageSix />
        <PageSeven />
        <PageEight />
      </main>
      <ScrollBar />
    </div>
    <StatusBar />
  </div>
);

export default App;
